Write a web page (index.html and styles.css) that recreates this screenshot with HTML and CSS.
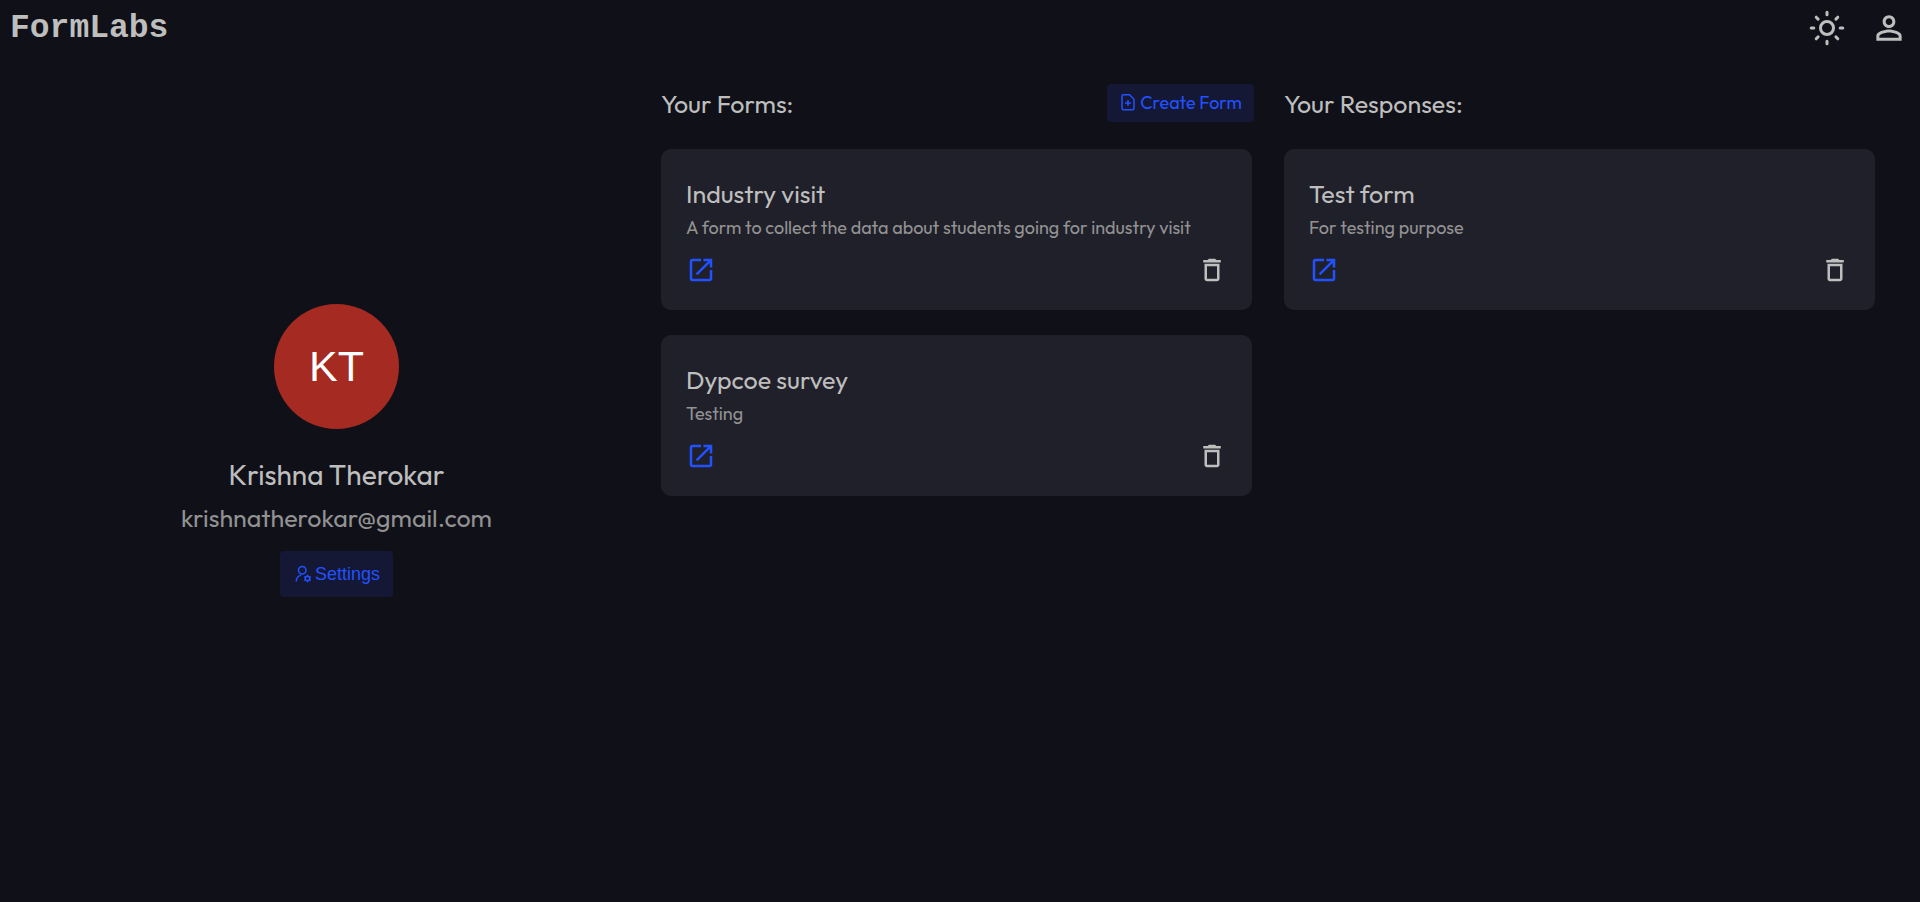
FILE: index.html
```html
<!DOCTYPE html>
<html lang="en">
<head>
<meta charset="utf-8">
<meta name="viewport" content="width=device-width, initial-scale=1">
<title>FormLabs</title>
<link rel="stylesheet" href="styles.css">
</head>
<body>
<svg class="icon-defs">
  <symbol id="icon-open" viewBox="0 0 24 24"><path d="M19 19H5V5h7V3H5c-1.11 0-2 .9-2 2v14c0 1.1.89 2 2 2h14c1.1 0 2-.9 2-2v-7h-2v7zM14 3v2h3.59l-9.83 9.83 1.41 1.41L19 6.41V10h2V3h-7z"/></symbol>
  <symbol id="icon-delete" viewBox="0 0 24 24"><path d="M6 19c0 1.1.9 2 2 2h8c1.1 0 2-.9 2-2V7H6v12zM8 9h8v10H8V9zm7.5-5-1-1h-5l-1 1H5v2h14V4h-3.500z"/></symbol>
</svg>
<header class="topbar">
  <a class="brand" href="#">FormLabs</a>
  <nav class="topbar-actions">
    <button class="icon-button" type="button" aria-label="Toggle theme">
      <svg class="icon-nav" viewBox="0 0 38 38" fill="none" stroke="currentColor" stroke-width="3" stroke-linecap="round"><circle cx="19" cy="19" r="6.500"/><path d="M19 3.200v2.600M19 32.200v2.600M3.200 19h2.600M32.200 19h2.600M8.200 8.200l1.900 1.900M27.900 27.900l1.900 1.900M8.200 29.800l1.900-1.900M27.900 10.100l1.900-1.900"/></svg>
    </button>
    <button class="icon-button" type="button" aria-label="Profile">
      <svg class="icon-nav" viewBox="0 0 24 24" fill="currentColor"><path d="M12 5.900c1.160 0 2.100.94 2.100 2.100s-.94 2.100-2.100 2.100S9.900 9.160 9.900 8s.94-2.100 2.100-2.100m0 9c2.970 0 6.100 1.460 6.100 2.100v1.100H5.900V17c0-.64 3.130-2.100 6.100-2.100M12 4C9.790 4 8 5.790 8 8s1.790 4 4 4 4-1.790 4-4-1.790-4-4-4zm0 9c-2.670 0-8 1.340-8 4v3h16v-3c0-2.660-5.330-4-8-4z"/></svg>
    </button>
  </nav>
</header>
<main class="dashboard">
  <section class="profile">
    <div class="avatar">KT</div>
    <h1 class="profile-name">Krishna Therokar</h1>
    <p class="profile-email">krishnatherokar@gmail.com</p>
    <button class="button button-settings" type="button">
      <svg class="icon-small" viewBox="0 0 24 24" fill="none" stroke="currentColor" stroke-width="2"><circle cx="11" cy="7" r="5"/><path d="M3 22c0-4.500 2.500-7.500 6.500-8.500"/><circle cx="18" cy="18" r="3" stroke-width="2"/><path d="M18 13v2M18 21v2M13.700 15.500l1.700 1M20.600 19.500l1.700 1M13.700 20.500l1.700-1M20.600 16.500l1.700-1"/></svg>
      Settings
    </button>
  </section>
  <section class="column">
    <div class="column-head">
      <h2 class="column-title">Your Forms:</h2>
      <button class="button" type="button">
        <svg class="icon-small" viewBox="0 0 24 24" fill="none" stroke="currentColor" stroke-width="2" stroke-linejoin="round"><path d="M14 1H6a2 2 0 0 0-2 2v16a2 2 0 0 0 2 2h12a2 2 0 0 0 2-2V7zM12 8v8M8 12h8"/></svg>
        Create Form
      </button>
    </div>
    <div class="cards">
      <article class="card">
        <h3 class="card-title">Industry visit</h3>
        <p class="card-text">A form to collect the data about students going for industry visit</p>
        <div class="card-actions">
          <a class="card-open" href="#" aria-label="Open Industry visit"><svg class="icon-card"><use href="#icon-open"/></svg></a>
          <button class="icon-button" type="button" aria-label="Delete Industry visit"><svg class="icon-card"><use href="#icon-delete"/></svg></button>
        </div>
      </article>
      <article class="card">
        <h3 class="card-title">Dypcoe survey</h3>
        <p class="card-text">Testing</p>
        <div class="card-actions">
          <a class="card-open" href="#" aria-label="Open Dypcoe survey"><svg class="icon-card"><use href="#icon-open"/></svg></a>
          <button class="icon-button" type="button" aria-label="Delete Dypcoe survey"><svg class="icon-card"><use href="#icon-delete"/></svg></button>
        </div>
      </article>
    </div>
  </section>
  <section class="column">
    <div class="column-head">
      <h2 class="column-title">Your Responses:</h2>
    </div>
    <div class="cards">
      <article class="card">
        <h3 class="card-title">Test form</h3>
        <p class="card-text">For testing purpose</p>
        <div class="card-actions">
          <a class="card-open" href="#" aria-label="Open Test form"><svg class="icon-card"><use href="#icon-open"/></svg></a>
          <button class="icon-button" type="button" aria-label="Delete Test form"><svg class="icon-card"><use href="#icon-delete"/></svg></button>
        </div>
      </article>
    </div>
  </section>
</main>
</body>
</html>
```
FILE: styles.css
```css
* {
  box-sizing: border-box;
}

body {
  display: flex;
  flex-direction: column;
  min-height: 100vh;
  margin: 0;
  background: #101118;
  color: #bebebe;
  font-family: Outfit, Lato, sans-serif;
}

h1, h2, h3, p {
  margin: 0;
  font-weight: 400;
}

svg {
  display: block;
}

.icon-defs {
  display: none;
}

.topbar {
  display: flex;
  align-items: center;
  justify-content: space-between;
  height: 56px;
  padding: 0 12px 0 10px;
}

.brand {
  padding-top: 2px;
  color: inherit;
  font: 700 33px/40px "Liberation Mono", monospace;
  text-decoration: none;
}

.topbar-actions {
  display: flex;
  gap: 24px;
}

.icon-button {
  padding: 0;
  border: 0;
  background: none;
  color: inherit;
  cursor: pointer;
}

.icon-nav {
  width: 38px;
  height: 38px;
}

.icon-small {
  width: 18px;
  height: 18px;
}

.icon-card {
  width: 30px;
  height: 30px;
  fill: currentColor;
}

.dashboard {
  display: grid;
  flex: 1;
  grid-template-columns: repeat(3, 1fr);
  padding: 0 25px 0 26px;
}

.profile {
  display: flex;
  flex-direction: column;
  align-items: center;
  justify-content: center;
  padding: 0 2px 57px 0;
}

.avatar {
  width: 125px;
  height: 125px;
  margin-bottom: 26px;
  border-radius: 50%;
  background: #a52a22;
  color: #fff;
  font: 43px/125px "Liberation Sans", sans-serif;
  text-align: center;
}

.profile-name {
  font-size: 28px;
  line-height: 40px;
}

.profile-email {
  margin: 2px 0 12px;
  color: #929292;
  font-size: 25px;
  line-height: 42px;
}

.button {
  display: flex;
  align-items: center;
  gap: 3px;
  height: 38px;
  padding: 0 12px;
  border: 0;
  border-radius: 4px;
  background: #141835;
  color: #2251ff;
  font: 18px/24px Outfit, Lato, sans-serif;
  cursor: pointer;
}

.button-settings {
  height: 46px;
  padding: 0 13px 0 14px;
  font-family: "Liberation Sans", sans-serif;
}

.column {
  padding: 28px 18px 0 12px;
}

.column-head {
  display: flex;
  align-items: flex-start;
  justify-content: space-between;
  min-height: 65px;
}

.column-title {
  font-size: 25px;
  line-height: 40px;
}

.cards {
  display: grid;
  gap: 25px;
  padding-right: 2px;
}

.card {
  padding: 28px 25px 25px;
  border-radius: 10px;
  background: #20202a;
}

.card-title {
  font-size: 25px;
  line-height: 34px;
}

.card-text {
  color: #929292;
  font-size: 18px;
  line-height: 34px;
}

.card-actions {
  display: flex;
  justify-content: space-between;
  padding-top: 10px;
}

.card-open {
  color: #2251ff;
}
```
